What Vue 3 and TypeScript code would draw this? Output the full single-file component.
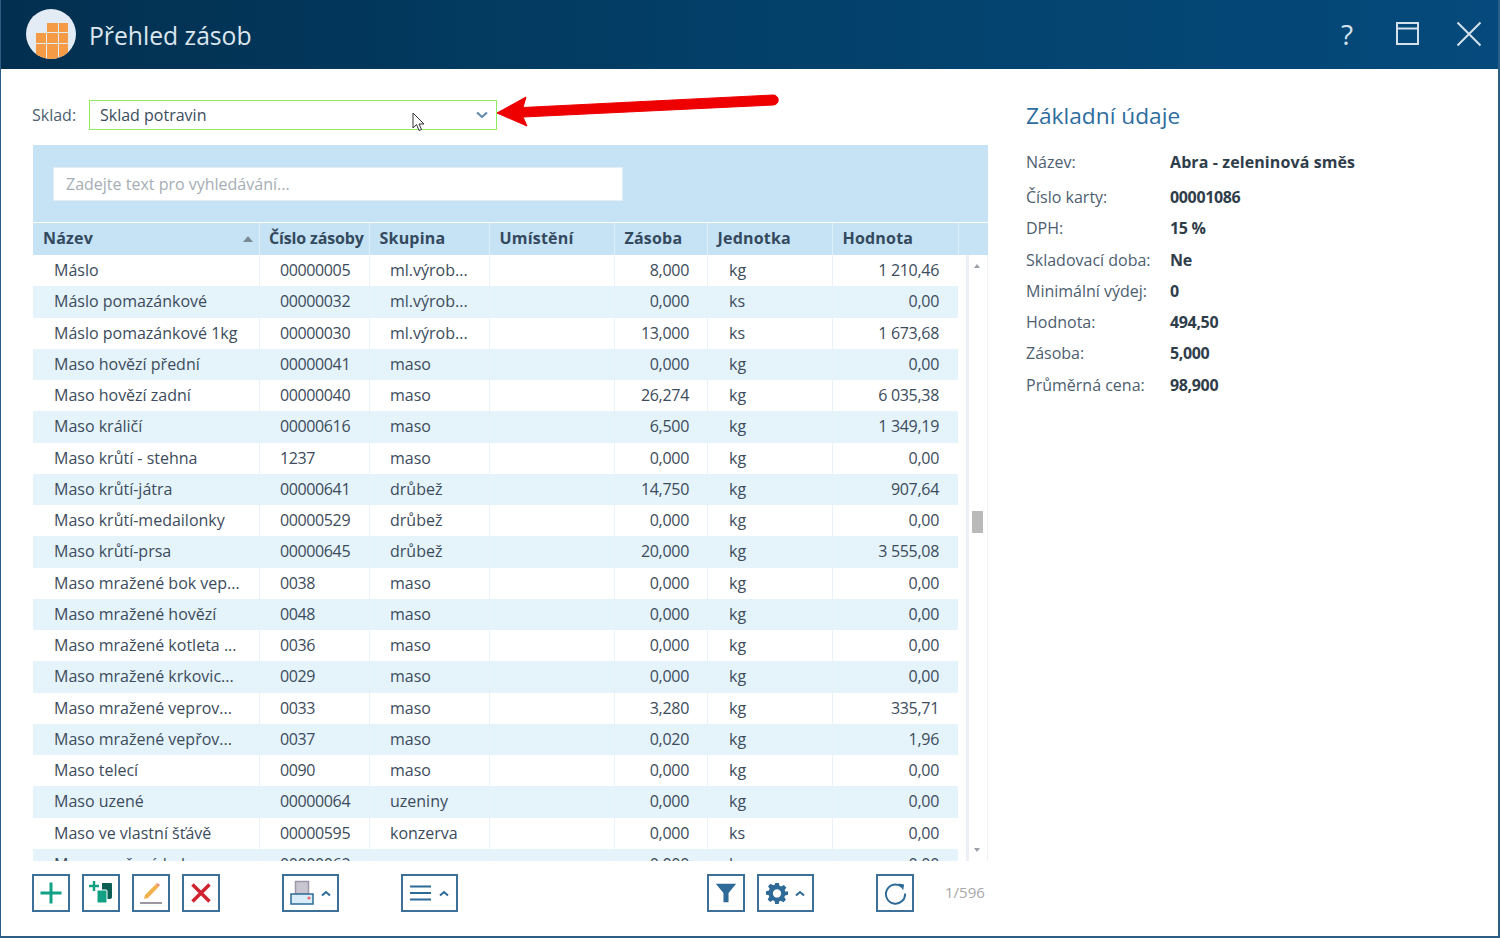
<script setup lang="ts">
interface Row { name: string; code: string; group: string; qty: string; unit: string; value: string }
const raw: string[][] = [
  ['Máslo', '00000005', 'ml.výrob...', '8,000', 'kg', '1 210,46'],
  ['Máslo pomazánkové', '00000032', 'ml.výrob...', '0,000', 'ks', '0,00'],
  ['Máslo pomazánkové 1kg', '00000030', 'ml.výrob...', '13,000', 'ks', '1 673,68'],
  ['Maso hovězí přední', '00000041', 'maso', '0,000', 'kg', '0,00'],
  ['Maso hovězí zadní', '00000040', 'maso', '26,274', 'kg', '6 035,38'],
  ['Maso králičí', '00000616', 'maso', '6,500', 'kg', '1 349,19'],
  ['Maso krůtí - stehna', '1237', 'maso', '0,000', 'kg', '0,00'],
  ['Maso krůtí-játra', '00000641', 'drůbež', '14,750', 'kg', '907,64'],
  ['Maso krůtí-medailonky', '00000529', 'drůbež', '0,000', 'kg', '0,00'],
  ['Maso krůtí-prsa', '00000645', 'drůbež', '20,000', 'kg', '3 555,08'],
  ['Maso mražené bok vep...', '0038', 'maso', '0,000', 'kg', '0,00'],
  ['Maso mražené hovězí', '0048', 'maso', '0,000', 'kg', '0,00'],
  ['Maso mražené kotleta ...', '0036', 'maso', '0,000', 'kg', '0,00'],
  ['Maso mražené krkovic...', '0029', 'maso', '0,000', 'kg', '0,00'],
  ['Maso mražené veprov...', '0033', 'maso', '3,280', 'kg', '335,71'],
  ['Maso mražené vepřov...', '0037', 'maso', '0,020', 'kg', '1,96'],
  ['Maso telecí', '0090', 'maso', '0,000', 'kg', '0,00'],
  ['Maso uzené', '00000064', 'uzeniny', '0,000', 'kg', '0,00'],
  ['Maso ve vlastní šťávě', '00000595', 'konzerva', '0,000', 'ks', '0,00'],
  ['Maso vepřové kuk...', '00000062', 'maso', '0,000', 'kg', '0,00'],
]
const rows: Row[] = raw.map(([name, code, group, qty, unit, value]) => ({ name, code, group, qty, unit, value }))
const headers = ['Název', 'Číslo zásoby', 'Skupina', 'Umístění', 'Zásoba', 'Jednotka', 'Hodnota', '']
const details: [string, string][] = [
  ['Číslo karty:', '00001086'],
  ['DPH:', '15 %'],
  ['Skladovací doba:', 'Ne'],
  ['Minimální výdej:', '0'],
  ['Hodnota:', '494,50'],
  ['Zásoba:', '5,000'],
  ['Průměrná cena:', '98,900'],
]
</script>

<template>
  <div class="window">
    <header class="titlebar">
      <div class="logo">
        <svg width="50" height="50" viewBox="0 0 50 50">
          <circle cx="25" cy="25" r="25" fill="#e3ecf4" />
          <clipPath id="lc"><circle cx="25" cy="25" r="25" /></clipPath>
          <g clip-path="url(#lc)" fill="#f59a45">
            <rect x="10" y="24" width="10" height="10" />
            <rect x="10" y="35" width="10" height="16" />
            <rect x="21" y="14" width="11" height="9" />
            <rect x="21" y="24" width="11" height="10" />
            <rect x="21" y="35" width="11" height="16" />
            <rect x="33" y="14" width="9" height="9" />
            <rect x="33" y="24" width="9" height="10" />
            <rect x="33" y="35" width="9" height="16" />
          </g>
        </svg>
      </div>
      <h1 class="title">Přehled zásob</h1>
      <div class="winbtns">
        <span class="help">?</span>
        <svg class="maxi" width="24" height="24" viewBox="0 0 24 24" fill="none" stroke="#d5e2ec" stroke-width="2">
          <rect x="1" y="1" width="21" height="21" /><path d="M1 6.500h21" />
        </svg>
        <svg width="26" height="26" viewBox="0 0 26 26" fill="none" stroke="#d5e2ec" stroke-width="2">
          <path d="M1.500 1.500l23 23M24.500 1.500l-23 23" />
        </svg>
      </div>
    </header>

    <main class="content">
      <section class="left">
        <div class="store">
          <label class="store-label">Sklad:</label>
          <div class="select">
            <span>Sklad potravin</span>
            <svg width="12" height="8" viewBox="0 0 12 8" fill="none" stroke="#5e86ad" stroke-width="2">
              <path d="M1 1.500l5 4.500 5-4.500" />
            </svg>
          </div>
        </div>

        <div class="grid-panel">
          <div class="search-band">
            <div class="search">Zadejte text pro vyhledávání...</div>
          </div>
          <div class="row head">
            <div v-for="(h, i) in headers" :key="i" class="hcell">
              {{ h }}
              <span v-if="i === 0" class="sort"></span>
            </div>
          </div>
          <div class="body">
            <div class="rows">
              <div v-for="(r, i) in rows" :key="i" class="row item" :class="{ odd: i % 2 === 1 }">
                <div class="cell name">{{ r.name }}</div>
                <div class="cell code">{{ r.code }}</div>
                <div class="cell group">{{ r.group }}</div>
                <div class="cell"></div>
                <div class="cell num">{{ r.qty }}</div>
                <div class="cell unit">{{ r.unit }}</div>
                <div class="cell num">{{ r.value }}</div>
              </div>
            </div>
            <div class="scroll">
              <span class="arrow up"></span>
              <span class="thumb"></span>
              <span class="arrow down"></span>
            </div>
          </div>
        </div>

        <div class="toolbar">
          <button class="tb">
            <svg width="24" height="24" viewBox="0 0 24 24"><path d="M12 1.500v21M1.500 12h21" stroke="#12a184" stroke-width="3" fill="none" /></svg>
          </button>
          <button class="tb">
            <svg width="26" height="26" viewBox="0 0 26 26">
              <path d="M14 3h9a1 1 0 0 1 1 1v13a2 2 0 0 1-2 2H14z" fill="#0b5f55" />
              <rect x="9" y="10" width="10" height="13" rx="1" fill="#12a184" stroke="#fff" />
              <path d="M6 1v10M1 6h10" stroke="#12a184" stroke-width="2.500" fill="none" />
            </svg>
          </button>
          <button class="tb">
            <svg width="24" height="24" viewBox="0 0 24 24">
              <path d="M6 14L17 3l3 2.500L9 17l-4 1z" fill="#f2b14c" />
              <path d="M17 3l1.500-1 2.500 2-1 1.500z" fill="#e98a86" />
              <path d="M1 22h22" stroke="#9d97a4" stroke-width="2" />
            </svg>
          </button>
          <button class="tb gap1">
            <svg width="24" height="24" viewBox="0 0 24 24"><path d="M3.500 3.500l17 17M20.500 3.500l-17 17" stroke="#cf2430" stroke-width="3.500" fill="none" /></svg>
          </button>
          <button class="tb wide gap2">
            <svg width="24" height="26" viewBox="0 0 24 26">
              <rect x="5.500" y="1.500" width="13" height="13" fill="#c9c6d2" stroke="#9c98a6" stroke-width="1.500" />
              <rect x="1" y="14" width="22" height="10" fill="#d9edf8" stroke="#2d6a97" stroke-width="1.500" />
              <circle cx="19" cy="18" r="1.600" fill="#f0686e" />
            </svg>
            <svg class="caret" width="10" height="7" viewBox="0 0 10 7"><path d="M1 5.500L5 2l4 3.500" fill="none" stroke="#2d6a97" stroke-width="2" /></svg>
          </button>
          <button class="tb wide grow">
            <svg width="22" height="18" viewBox="0 0 22 18"><path d="M0 2.500h21M0 9h21M0 15.500h21" stroke="#2d6a97" stroke-width="2.200" /></svg>
            <svg class="caret" width="10" height="7" viewBox="0 0 10 7"><path d="M1 5.500L5 2l4 3.500" fill="none" stroke="#2d6a97" stroke-width="2" /></svg>
          </button>
          <button class="tb">
            <svg width="22" height="22" viewBox="0 0 26 26"><path d="M1 2h24l-9 11v11h-6V13z" fill="#2d6a97" /></svg>
          </button>
          <button class="tb wide gap3">
            <svg width="22" height="22" viewBox="0 0 24 24">
              <path fill="#2d6a97" fill-rule="evenodd" d="M10 1h4l.7 3.200 1.900.8 2.800-1.800 2.800 2.800-1.800 2.800.8 1.900L24 10v4l-3.200.7-.8 1.900 1.800 2.800-2.800 2.800-2.800-1.800-1.900.8L14 24h-4l-.7-3.200-1.900-.8-2.800 1.800-2.800-2.800 1.800-2.800-.8-1.900L0 14v-4l3.200-.7.8-1.900L2.200 4.600 5 1.800l2.800 1.800 1.900-.8zM12 8a4.500 4.500 0 1 0 0 9 4.500 4.500 0 0 0 0-9z" />
            </svg>
            <svg class="caret" width="10" height="7" viewBox="0 0 10 7"><path d="M1 5.500L5 2l4 3.500" fill="none" stroke="#2d6a97" stroke-width="2" /></svg>
          </button>
          <button class="tb">
            <svg width="23" height="23" viewBox="0 0 24 24" fill="none">
              <path d="M18.500 5A10 10 0 1 0 22 12" stroke="#2d6a97" stroke-width="2" />
              <path d="M15 1.500l6 1-1 6z" fill="#2d6a97" />
            </svg>
          </button>
          <span class="count">1/596</span>
        </div>
      </section>

      <aside class="right">
        <h2 class="section">Základní údaje</h2>
        <div class="first dl"><span class="k">Název:</span><b class="v">Abra - zeleninová směs</b></div>
        <div v-for="d in details" :key="d[0]" class="dl"><span class="k">{{ d[0] }}</span><b class="v digits">{{ d[1] }}</b></div>
      </aside>
    </main>

    <svg class="annot-arrow" width="290" height="40" viewBox="0 0 290 40">
      <path d="M2 20L31 4l-3 10.500L278 2a5 5 0 0 1 .5 10L28 24l4 9z" fill="#ee0000" stroke="#ee0000" stroke-linejoin="round" />
    </svg>
    <svg class="cursor" width="14" height="20" viewBox="0 0 14 20">
      <path d="M1 1v15l3.500-3.500L7 18.500l2.500-1-2.500-5.500h5z" fill="#fff" stroke="#333" stroke-width="1" />
    </svg>
  </div>
</template>

<style scoped>
.window {
  position: relative;
  width: 1500px;
  height: 938px;
  box-sizing: border-box;
  display: flex;
  flex-direction: column;
  background: #fff;
  border: solid #2b5d85;
  border-width: 0 2px 2px 1px;
  overflow: hidden;
  font-family: "Open Sans", sans-serif;
  font-size: 16px;
  color: #3c4c5c;
}
.titlebar {
  height: 69px;
  flex: none;
  box-sizing: border-box;
  display: flex;
  align-items: center;
  padding: 0 16px 2px 25px;
  background: linear-gradient(90deg, #022f4f 0%, #034069 50%, #054a7c 100%);
}
.logo { width: 50px; height: 50px; }
.title {
  margin: 3px 0 0 13px;
  font-size: 24.700px;
  font-weight: 400;
  color: #dbe6ee;
}
.winbtns { margin-left: auto; display: flex; align-items: center; gap: 35px; }
.help { font-size: 28px; color: #d5e2ec; width: 20px; text-align: center; line-height: 1; margin-right: 4px; }
.maxi { margin-right: 1px; }
.content { flex: 1; display: flex; min-height: 0; }
.left { width: 955px; margin-left: 32px; display: flex; flex-direction: column; min-height: 0; }
.store { display: flex; align-items: center; height: 30px; margin-top: 31px; }
.store-label { width: 57px; margin-left: -1px; color: #4d5e6f; }
.select {
  width: 408px;
  height: 30px;
  box-sizing: border-box;
  border: 1px solid #8ef060;
  display: flex;
  align-items: center;
  justify-content: space-between;
  padding: 0 8px 0 10px;
  line-height: 29px;
  color: #3c4c5c;
}
.grid-panel { margin-top: 15px; flex: 1; min-height: 0; display: flex; flex-direction: column; overflow: hidden; background: #fff; }
.search-band { height: 77px; flex: none; box-sizing: border-box; padding: 22px 20px 0; background: #c5e3f5; }
.search {
  width: 570px;
  height: 34px;
  box-sizing: border-box;
  background: #fff;
  border: 1px solid #e2edf4;
  padding: 0 12px;
  line-height: 32px;
  color: #a5adb5;
}
.row {
  display: grid;
  grid-template-columns: 227px 110px 120px 125px 93px 125px 125px;
}
.head {
  grid-template-columns: 227px 110px 120px 125px 93px 125px 126px 29px;
  height: 32px;
  flex: none;
  box-sizing: border-box;
  margin-top: 1px;
  background: #c5e3f5;
}
.hcell {
  position: relative;
  box-sizing: border-box;
  border-right: 1px solid #e0eff9;
  padding-left: 9.500px;
  font-weight: 700;
  letter-spacing: 0.2px;
  line-height: 31px;
  color: #34495e;
  white-space: nowrap;
  overflow: hidden;
}
.hcell:first-child { padding-left: 10px; }
.hcell:nth-child(2) { letter-spacing: -0.15px; padding-left: 9px; }
.hcell:last-child { border-right: 0; }
.sort {
  position: absolute;
  right: 6px;
  top: 13px;
  border: 5.500px solid transparent;
  border-top: 0;
  border-bottom: 6px solid #7d8a96;
}
.body { flex: 1; min-height: 0; display: flex; }
.rows { width: 925px; flex: none; overflow: hidden; }
.item { height: 31.250px; line-height: 31.500px; background: #fff; }
.item.odd { background: #e5f3fb; }
.cell { border-right: 1px solid #e9f0f8; white-space: nowrap; overflow: hidden; box-sizing: border-box; }
.item .cell:last-child { border-right: 0; }
.name { padding-left: 21px; }
.code { padding-left: 20px; letter-spacing: -0.38px; }
.group { padding-left: 20px; }
.unit { padding-left: 21px; }
.num { text-align: right; padding-right: 18px; letter-spacing: -0.3px; }
.item .cell:last-child.num { padding-right: 19px; }
.scroll {
  flex: none;
  width: 22px;
  margin-left: 8px;
  position: relative;
  box-sizing: border-box;
  border-left: 3px solid #eceff3;
  border-right: 1px solid #eef3f9;
}
.arrow { position: absolute; left: 4.500px; border: 3.500px solid transparent; }
.arrow.up { top: 9px; border-top: 0; border-bottom: 4px solid #9aa0a6; }
.arrow.down { bottom: 9px; border-bottom: 0; border-top: 4px solid #9aa0a6; }
.thumb { position: absolute; left: 3px; top: 256px; width: 11px; height: 22px; background: #b9b9b9; }
.toolbar { height: 75px; flex: none; display: flex; align-items: flex-start; padding-top: 13px; margin-left: -1px; box-sizing: border-box; }
.tb {
  width: 38px;
  height: 38px;
  flex: none;
  box-sizing: border-box;
  border: 2px solid #3c7099;
  background: #fff;
  padding: 0;
  margin-right: 12px;
  display: flex;
  align-items: center;
  justify-content: center;
}
.tb.wide { width: 57px; gap: 7px; }
.tb.gap1 { margin-right: 62px; }
.tb.gap2 { margin-right: 62px; }
.tb.grow { margin-right: 249px; }
.tb.gap3 { margin-right: 62px; }
.caret { flex: none; }
.count { margin-left: 19px; line-height: 36px; font-size: 15px; color: #a8a8a8; }
.right { margin-left: 38px; flex: 1; }
.section { margin: 31px 0 15px; font-size: 22.700px; font-weight: 400; color: #2e6d9e; line-height: 32px; }
.dl { display: flex; height: 31.250px; line-height: 31px; }
.dl.first { height: 35px; }
.k { width: 144px; color: #4d5e6f; }
.v { font-weight: 700; color: #2f3d4b; letter-spacing: 0.1px; }
.v.digits { letter-spacing: -0.35px; }
.annot-arrow { position: absolute; left: 494px; top: 93px; }
.cursor { position: absolute; left: 411px; top: 112px; }
</style>
